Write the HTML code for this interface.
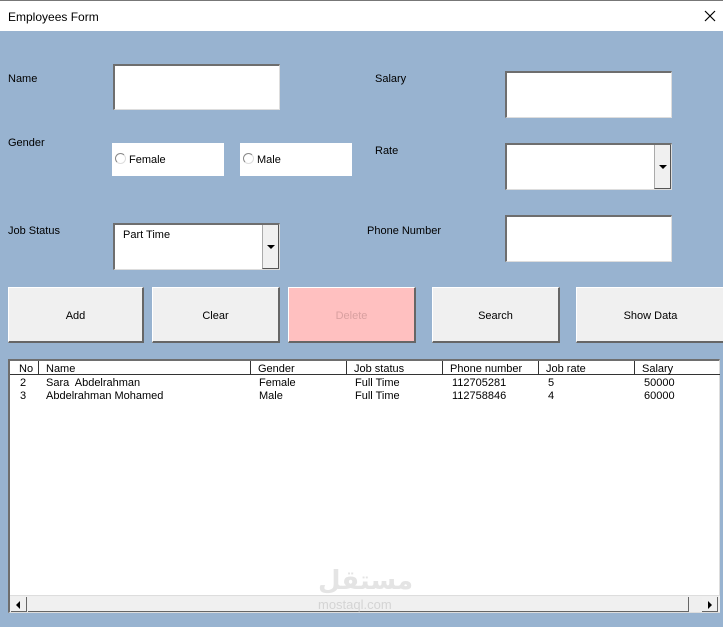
<!DOCTYPE html>
<html><head><meta charset="utf-8"><style>
*{margin:0;padding:0;box-sizing:border-box}
body{width:723px;height:627px;background:#98b3d0;font-family:"Liberation Sans",Tahoma,sans-serif;font-size:11px;color:#000;position:relative;overflow:hidden}
.a{position:absolute}
.title{left:0;top:0;width:723px;height:31px;background:#fff;border-top:1px solid #777}
.lbl{position:absolute;font-size:11px}
.tb{position:absolute;background:#fff;border-top:2px solid #6e6e6e;border-left:2px solid #6e6e6e;border-right:1px solid #ddd;border-bottom:1px solid #ddd}
.dd{position:absolute;right:0;top:0;bottom:0;width:17px;background:#f0f0f0;border-left:1px solid #aaa;border-right:1px solid #555;border-bottom:1px solid #555}
.dd:after{content:"";position:absolute;left:4px;top:50%;margin-top:-2px;border-left:4px solid transparent;border-right:4px solid transparent;border-top:4px solid #000}
.opt{position:absolute;background:#fff}
.rad{position:absolute;left:3px;top:10px;width:11px;height:11px;border-radius:50%;border:1px solid #888;border-right-color:#ddd;border-bottom-color:#ddd;background:#fff}
.btn{position:absolute;background:#f0f0f0;border:1px solid #fff;border-right:2px solid #666;border-bottom:2px solid #666;text-align:center;line-height:56px;font-size:11px}
.col{position:absolute;top:0;height:14px;border-right:1px solid #333;font-size:11px;padding-left:7px;line-height:16px}
.row{position:absolute;font-size:11px}
</style></head><body>
<div class="a title"><span style="position:absolute;left:8px;top:9px;font-size:12px">Employees Form</span>
<svg style="position:absolute;left:704px;top:9px" width="12" height="12"><path d="M1 1L11 11M11 1L1 11" stroke="#000" stroke-width="1.2"/></svg></div>

<div class="lbl" style="left:8px;top:73px">Name</div>
<div class="lbl" style="left:8px;top:137px">Gender</div>
<div class="lbl" style="left:8px;top:225px">Job Status</div>
<div class="lbl" style="left:375px;top:73px">Salary</div>
<div class="lbl" style="left:375px;top:145px">Rate</div>
<div class="lbl" style="left:367px;top:225px">Phone Number</div>

<div class="tb" style="left:113px;top:64px;width:167px;height:46px"></div>
<div class="opt" style="left:112px;top:143px;width:112px;height:33px"><div class="rad"></div><span style="position:absolute;left:17px;top:11px">Female</span></div>
<div class="opt" style="left:240px;top:143px;width:112px;height:33px"><div class="rad"></div><span style="position:absolute;left:17px;top:11px">Male</span></div>
<div class="tb" style="left:113px;top:223px;width:167px;height:47px"><span style="position:absolute;left:8px;top:4px">Part Time</span><div class="dd"></div></div>
<div class="tb" style="left:505px;top:71px;width:167px;height:47px"></div>
<div class="tb" style="left:505px;top:143px;width:167px;height:47px"><div class="dd"></div></div>
<div class="tb" style="left:505px;top:215px;width:167px;height:47px"></div>

<div class="btn" style="left:8px;top:287px;width:136px;height:56px">Add</div>
<div class="btn" style="left:152px;top:287px;width:128px;height:56px">Clear</div>
<div class="btn" style="left:288px;top:287px;width:128px;height:56px;background:#ffc0c0;color:#d9a0a0">Delete</div>
<div class="btn" style="left:432px;top:287px;width:128px;height:56px">Search</div>
<div class="btn" style="left:576px;top:287px;width:150px;height:56px">Show Data</div>

<div class="a" style="left:8px;top:359px;width:712px;height:254px;background:#fff;border-top:2px solid #6e6e6e;border-left:2px solid #6e6e6e;border-right:1px solid #ddd;border-bottom:1px solid #ddd">
 <div style="position:absolute;left:0;top:0;width:710px;height:14px;border-bottom:1px solid #333"></div>
 <div class="col" style="left:2px;width:27px">No</div>
 <div class="col" style="left:29px;width:212px">Name</div>
 <div class="col" style="left:241px;width:96px">Gender</div>
 <div class="col" style="left:337px;width:96px">Job status</div>
 <div class="col" style="left:433px;width:96px">Phone number</div>
 <div class="col" style="left:529px;width:96px">Job rate</div>
 <div class="col" style="left:625px;width:85px;border-right:none">Salary</div>
 <div class="row" style="top:16px;left:10px">2</div><div class="row" style="top:16px;left:36px">Sara&nbsp; Abdelrahman</div><div class="row" style="top:16px;left:249px">Female</div><div class="row" style="top:16px;left:345px">Full Time</div><div class="row" style="top:16px;left:442px">112705281</div><div class="row" style="top:16px;left:538px">5</div><div class="row" style="top:16px;left:634px">50000</div>
 <div class="row" style="top:29px;left:10px">3</div><div class="row" style="top:29px;left:36px">Abdelrahman Mohamed</div><div class="row" style="top:29px;left:249px">Male</div><div class="row" style="top:29px;left:345px">Full Time</div><div class="row" style="top:29px;left:442px">112758846</div><div class="row" style="top:29px;left:538px">4</div><div class="row" style="top:29px;left:634px">60000</div>
 <div style="position:absolute;left:0;top:234px;width:710px;height:17px;background:#efefef;border-top:1px solid #ddd">
  <div style="position:absolute;left:1px;top:1px;width:16px;height:15px;background:#f0f0f0;border-right:1px solid #666;border-bottom:1px solid #666"><div style="position:absolute;left:5px;top:4px;border-top:4px solid transparent;border-bottom:4px solid transparent;border-right:4px solid #000"></div></div>
  <div style="position:absolute;left:18px;top:1px;width:661px;height:15px;background:#f0f0f0;border-right:1px solid #666;border-bottom:1px solid #666"></div>
  <div style="position:absolute;left:692px;top:1px;width:16px;height:15px;background:#f0f0f0;border-right:1px solid #666;border-bottom:1px solid #666"><div style="position:absolute;left:6px;top:4px;border-top:4px solid transparent;border-bottom:4px solid transparent;border-left:4px solid #000"></div></div>
 </div>
 <div style="position:absolute;left:308px;top:205px;color:#e4e4e4;font-size:26px;font-weight:bold;font-family:'DejaVu Sans',sans-serif">مستقل</div>
 <div style="position:absolute;left:308px;top:236px;color:#d4d4d4;font-size:13px">mostaql.com</div>
</div>
</body></html>
